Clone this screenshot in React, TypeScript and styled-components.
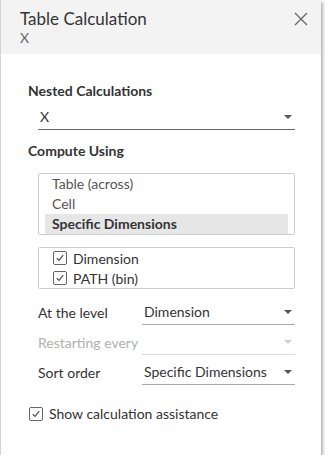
import styled, { createGlobalStyle } from "styled-components";

const Global = createGlobalStyle`
  html, body {
    margin: 0;
    padding: 0;
    background: #ffffff;
  }
  body {
    font-family: "Lato", "Open Sans", sans-serif;
    color: #333333;
  }
`;

const Dialog = styled.div`
  width: 321px;
  height: 455px;
  background: #ffffff;
  border-left: 1px solid #d4d4d4;
  box-shadow: 2px 2px 3px rgba(0, 0, 0, 0.3);
  display: flex;
  flex-direction: column;
  box-sizing: border-box;
`;

const Header = styled.div`
  height: 54px;
  background: #f3f3f3;
  display: flex;
  justify-content: space-between;
  padding: 8px 12px 0 19px;
  box-sizing: border-box;
`;

const TitleBlock = styled.div`
  display: flex;
  flex-direction: column;
`;

const Title = styled.div`
  font-size: 17px;
  line-height: 21px;
  color: #333333;
`;

const Subtitle = styled.div`
  font-size: 14px;
  line-height: 17px;
  color: #666666;
`;

const Close = styled.button`
  border: 0;
  background: none;
  padding: 0;
  margin-top: 4px;
  width: 16px;
  height: 16px;
  cursor: pointer;
`;

const Body = styled.div`
  padding: 29px 26px 0 27px;
  display: flex;
  flex-direction: column;
`;

const SectionLabel = styled.div<{ $gap?: number; $mt?: number }>`
  font-size: 14px;
  font-weight: bold;
  line-height: 16px;
  color: #333333;
  margin-top: ${(p) => p.$mt ?? 0}px;
  margin-bottom: ${(p) => p.$gap ?? 4}px;
`;

const Select = styled.div<{ $disabled?: boolean; $strong?: boolean }>`
  flex: 1;
  height: 26px;
  display: flex;
  align-items: center;
  justify-content: space-between;
  padding: 0 1px 0 2px;
  border-bottom: 1px solid
    ${(p) => (p.$disabled ? "#dcdcdc" : p.$strong ? "#666666" : "#a8a8a8")};
  box-sizing: border-box;
  font-size: 14px;
  color: ${(p) => (p.$disabled ? "#b0b0b0" : "#333333")};
`;

const Arrow = styled.span<{ $disabled?: boolean }>`
  width: 0;
  height: 0;
  border-left: 4px solid transparent;
  border-right: 4px solid transparent;
  border-top: 4px solid ${(p) => (p.$disabled ? "#cfcfcf" : "#555555")};
  margin-right: 2px;
`;

const Indented = styled.div<{ $mt?: number }>`
  margin-left: 10px;
  margin-top: ${(p) => p.$mt ?? 0}px;
  display: flex;
`;

const ListBox = styled.div`
  flex: 1;
  border: 1px solid #cccccc;
  border-radius: 2px;
  padding: 0 6px;
  display: flex;
  flex-direction: column;
  box-sizing: border-box;
`;

const ListItem = styled.div<{ $selected?: boolean }>`
  height: 20px;
  line-height: 20px;
  padding-left: 7px;
  font-size: 14px;
  color: ${(p) => (p.$selected ? "#333333" : "#555555")};
  font-weight: ${(p) => (p.$selected ? "bold" : "normal")};
  background: ${(p) => (p.$selected ? "#e6e6e6" : "transparent")};
`;

const CheckRow = styled.div`
  height: 20px;
  display: flex;
  align-items: center;
  gap: 6px;
  padding-left: 8px;
  font-size: 14px;
  color: #333333;
`;

const Box = styled.span`
  width: 12px;
  height: 12px;
  border: 1px solid #666666;
  border-radius: 2px;
  display: inline-flex;
  align-items: center;
  justify-content: center;
  background: #ffffff;
  flex-shrink: 0;
`;

const Fields = styled.div`
  display: flex;
  flex-direction: column;
  margin-top: 8px;
`;

const FieldRow = styled.div`
  display: flex;
  align-items: center;
  height: 30px;
  margin-left: 10px;
`;

const FieldLabel = styled.div<{ $disabled?: boolean }>`
  width: 104px;
  font-size: 14px;
  color: ${(p) => (p.$disabled ? "#b0b0b0" : "#333333")};
`;

const Assist = styled.div`
  display: flex;
  align-items: center;
  gap: 6px;
  margin-top: 18px;
  margin-left: 1px;
  font-size: 14px;
  color: #333333;
`;

const Check = () => (
  <Box>
    <svg width="10" height="10" viewBox="0 0 10 10">
      <path d="M1.8 5.2 L4 7.4 L8.2 2.2" fill="none" stroke="#555555" strokeWidth="1.3" />
    </svg>
  </Box>
);

export default function App() {
  return (
    <>
      <Global />
      <Dialog>
        <Header>
          <TitleBlock>
            <Title>Table Calculation</Title>
            <Subtitle>X</Subtitle>
          </TitleBlock>
          <Close aria-label="Close">
            <svg width="14" height="14" viewBox="0 0 14 14">
              <path d="M1 1 L13 13 M13 1 L1 13" stroke="#666666" strokeWidth="1.3" />
            </svg>
          </Close>
        </Header>
        <Body>
          <SectionLabel $gap={5}>Nested Calculations</SectionLabel>
          <Indented>
            <Select $strong>
              X
              <Arrow />
            </Select>
          </Indented>
          <SectionLabel $mt={13} $gap={14}>
            Compute Using
          </SectionLabel>
          <Indented>
            <ListBox>
              <ListItem>Table (across)</ListItem>
              <ListItem>Cell</ListItem>
              <ListItem $selected>Specific Dimensions</ListItem>
            </ListBox>
          </Indented>
          <Indented $mt={12}>
            <ListBox>
              <CheckRow>
                <Check />
                Dimension
              </CheckRow>
              <CheckRow>
                <Check />
                PATH (bin)
              </CheckRow>
            </ListBox>
          </Indented>
          <Fields>
            <FieldRow>
              <FieldLabel>At the level</FieldLabel>
              <Select>
                Dimension
                <Arrow />
              </Select>
            </FieldRow>
            <FieldRow>
              <FieldLabel $disabled>Restarting every</FieldLabel>
              <Select $disabled>
                <span />
                <Arrow $disabled />
              </Select>
            </FieldRow>
            <FieldRow>
              <FieldLabel>Sort order</FieldLabel>
              <Select>
                Specific Dimensions
                <Arrow />
              </Select>
            </FieldRow>
          </Fields>
          <Assist>
            <Check />
            Show calculation assistance
          </Assist>
        </Body>
      </Dialog>
    </>
  );
}
